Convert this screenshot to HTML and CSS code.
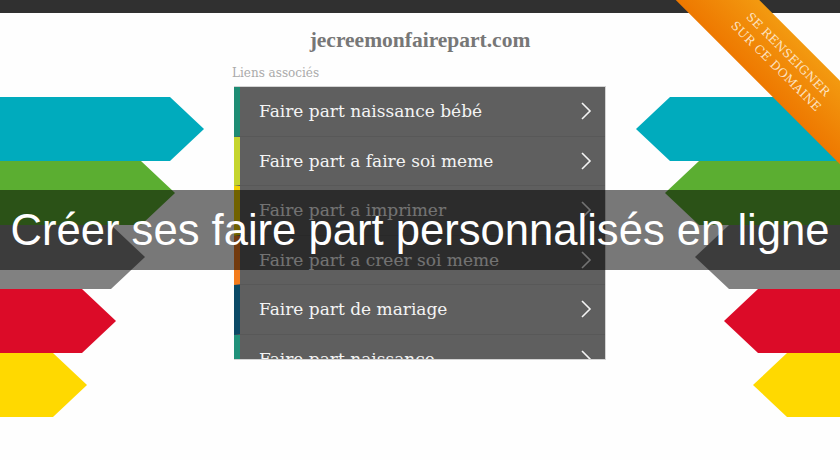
FILE: index.html
```html
<!DOCTYPE html>
<html lang="fr">
<head>
    <meta charset="UTF-8">
    <meta name="viewport" content="width=device-width, initial-scale=1.0">
    <title>jecreemonfairepart.com</title>
    <link rel="stylesheet" href="styles.css">
</head>
<body>
    <div class="topbar"></div>
    <h1 class="site-title">jecreemonfairepart.com</h1>

    <div class="main">
        <div class="arrows arrows-left">
            <div class="arrow teal w1"></div>
            <div class="arrow green w2"></div>
            <div class="arrow gray w3"></div>
            <div class="arrow red w4"></div>
            <div class="arrow yellow w5"></div>
        </div>

        <div class="links">
            <div class="links-label">Liens associés</div>
            <ul class="menu">
                <li class="c-teal"><span>Faire part naissance bébé</span><svg class="chev" viewBox="0 0 12 20"><polyline points="2,2 10,10 2,18"/></svg></li>
                <li class="c-lime"><span>Faire part a faire soi meme</span><svg class="chev" viewBox="0 0 12 20"><polyline points="2,2 10,10 2,18"/></svg></li>
                <li class="c-yellow"><span>Faire part a imprimer</span><svg class="chev" viewBox="0 0 12 20"><polyline points="2,2 10,10 2,18"/></svg></li>
                <li class="c-orange"><span>Faire part a creer soi meme</span><svg class="chev" viewBox="0 0 12 20"><polyline points="2,2 10,10 2,18"/></svg></li>
                <li class="c-navy"><span>Faire part de mariage</span><svg class="chev" viewBox="0 0 12 20"><polyline points="2,2 10,10 2,18"/></svg></li>
                <li class="c-teal2"><span>Faire part naissance</span><svg class="chev" viewBox="0 0 12 20"><polyline points="2,2 10,10 2,18"/></svg></li>
            </ul>
        </div>

        <div class="arrows arrows-right">
            <div class="arrow teal w1"></div>
            <div class="arrow green w2"></div>
            <div class="arrow gray w3"></div>
            <div class="arrow red w4"></div>
            <div class="arrow yellow w5"></div>
        </div>
    </div>

    <!-- banner and ribbon sit over the page -->
    <div class="banner">Créer ses faire part personnalisés en ligne</div>
    <div class="ribbon">SE RENSEIGNER<br>SUR CE DOMAINE</div>
</body>
</html>
```

FILE: styles.css
```css
body {
    margin: 0;
    padding: 0;
    width: 840px;
    height: 460px;
    overflow: hidden;
    position: relative;
    background-color: #fefefe;
    font-family: "DejaVu Serif", serif;
}
.topbar {
    height: 13px;
    background-color: #303030;
}
.site-title {
    margin: 0;
    padding-top: 15px;
    font-size: 21.5px;
    line-height: 25px;
    text-align: center;
    color: #777;
    font-family: "Liberation Serif", serif;
    font-weight: bold;
}
.main {
    display: grid;
    grid-template-columns: 234px 372px 234px;
    margin-top: 12px;
}
.arrows {
    display: flex;
    flex-direction: column;
    margin-top: 32px;
}
.arrows-right {
    align-items: flex-end;
}
.arrow {
    height: 64px;
}
.arrows-left .arrow {
    clip-path: polygon(0 0, calc(100% - 34px) 0, 100% 50%, calc(100% - 34px) 100%, 0 100%);
}
.arrows-right .arrow {
    clip-path: polygon(34px 0, 100% 0, 100% 100%, 34px 100%, 0 50%);
}
.w1 { width: 204px; }
.w2 { width: 175px; }
.w3 { width: 145px; }
.w4 { width: 116px; }
.w5 { width: 87px; }
.teal { background-color: #00abbd; }
.green { background-color: #5bae31; }
.gray { background-color: #818181; }
.red { background-color: #dc0b28; }
.yellow { background-color: #ffd900; }

.links-label {
    font-size: 12px;
    line-height: 16px;
    color: #aaa;
    margin-bottom: 5px;
    margin-left: -2px;
}
.menu {
    list-style: none;
    margin: 0;
    padding: 0;
    height: 274px;
    overflow: hidden;
    background-color: #5f5f5f;
    border: 1px solid #d4d4d4;
    border-left: none;
    box-sizing: border-box;
}
.menu li {
    display: flex;
    align-items: center;
    justify-content: space-between;
    box-sizing: border-box;
    height: 49.5px;
    padding: 0 13px 0 19px;
    border-left: 6px solid #1e8c74;
    border-bottom: 1px solid #585858;
    color: #f4f4f4;
    font-size: 17px;
}
.chev {
    width: 12px;
    height: 20px;
    fill: none;
    stroke: #f4f4f4;
    stroke-width: 1.6;
}
.c-teal { border-left-color: #1e8c74 !important; }
.c-lime { border-left-color: #c5d52f !important; }
.c-yellow { border-left-color: #f0d000 !important; }
.c-orange { border-left-color: #f47c1c !important; }
.c-navy { border-left-color: #0b4a66 !important; }
.c-teal2 { border-left-color: #20917a !important; }

.banner {
    position: absolute;
    left: 0;
    top: 190px;
    width: 100%;
    height: 80px;
    line-height: 80px;
    background-color: rgba(0, 0, 0, 0.53);
    color: #fff;
    font-family: "Liberation Sans", Arial, sans-serif;
    font-size: 43.6px;
    text-align: center;
}
.ribbon {
    position: absolute;
    left: 630px;
    top: 33px;
    width: 300px;
    height: 59px;
    box-sizing: border-box;
    padding-bottom: 6px;
    display: flex;
    flex-direction: column;
    justify-content: center;
    align-items: center;
    transform: rotate(45deg);
    background: linear-gradient(to bottom, #f39a10, #ee7800);
    color: #fde2c0;
    font-size: 12px;
    line-height: 17px;
    letter-spacing: 0.3px;
    text-align: center;
}
```
